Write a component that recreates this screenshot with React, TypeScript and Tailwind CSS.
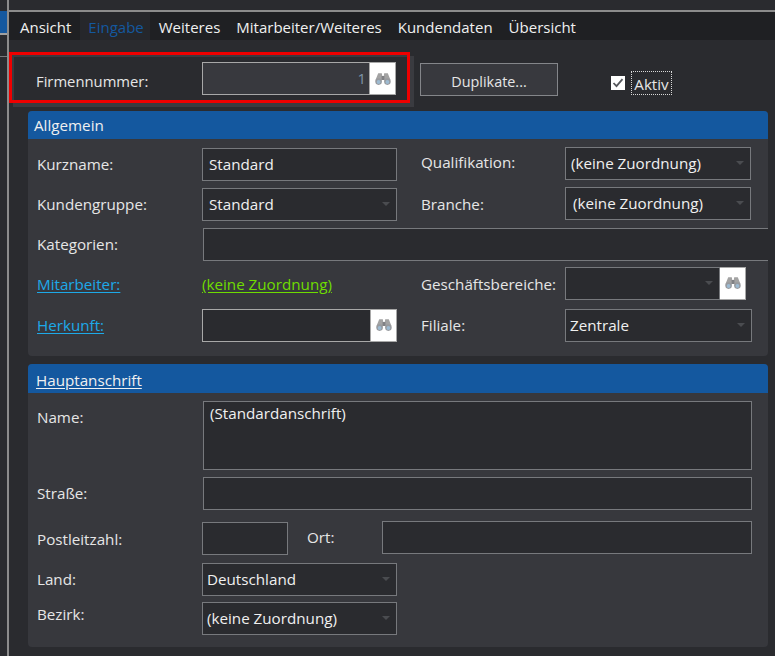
import React from "react";

const Binoculars = () => (
  <svg width="18" height="14" viewBox="0 0 18 14">
    <path d="M4.2 1.2h3.6l.5 2.8h1.4l.5-2.8h3.6l2.6 6.5-2.4 2H11.2L10.4 8H7.6l-.8 1.7H2l-.4-2z" fill="#a3a3a3" />
    <rect x="7.6" y="4" width="2.8" height="4" fill="#808184" />
    <circle cx="4.6" cy="9.6" r="3.3" fill="#989a9e" />
    <circle cx="13.4" cy="9.6" r="3.3" fill="#989a9e" />
    <circle cx="4.6" cy="10" r="1.9" fill="#9dbbd2" />
    <circle cx="13.4" cy="10" r="1.9" fill="#9dbbd2" />
  </svg>
);

const Search = () => (
  <div className="w-[26px] shrink-0 bg-white border border-[#a8a8a8] border-l-0 flex items-center justify-center">
    <Binoculars />
  </div>
);

const Arrow = () => (
  <span className="ml-auto mr-[6px] w-0 h-0 border-x-[4px] border-x-transparent border-t-[4px] border-t-[#4a4c50] shrink-0" />
);

const Select = ({ text, w, pl = "pl-[5px]" }: { text: string; w: string; pl?: string }) => (
  <div className={`${w} h-[33px] shrink-0 bg-[#2a2b2f] border border-[#77797d] flex items-center ${pl} text-[#f0f0f0]`}>
    <span>{text}</span>
    <Arrow />
  </div>
);

const Input = ({ text, w }: { text?: string; w: string }) => (
  <div className={`${w} h-[33px] shrink-0 bg-[#2a2b2f] border border-[#77797d] flex items-center pl-[6px] text-[#f0f0f0]`}>
    {text}
  </div>
);

const Label = ({ children, w = "w-[165px]" }: { children: React.ReactNode; w?: string }) => (
  <div className={`${w} shrink-0 text-[#e6e6e6]`}>{children}</div>
);

const LinkLabel = ({ children }: { children: React.ReactNode }) => (
  <div className="w-[165px] shrink-0 text-[#1da9e8] underline underline-offset-2">{children}</div>
);

const Row = ({ children, h }: { children: React.ReactNode; h: string }) => (
  <div className={`flex items-center ${h}`}>{children}</div>
);

export default function App() {
  return (
    <div
      className="w-[775px] h-[656px] overflow-hidden bg-[#2a2b2f] flex text-[15.2px] leading-[19px]"
      style={{ fontFamily: '"Open Sans", sans-serif' }}
    >
      <div className="w-[9px] shrink-0 flex flex-col bg-[#2a2b2f] border-r-[2px] border-[#8c8c8c]">
        <div className="h-[11px] shrink-0" />
        <div className="h-[22px] shrink-0 bg-[#14589f]" />
        <div className="h-[24px] shrink-0 border-t-[2px] border-b border-t-[#a0a0a0] border-b-[#77797d]" />
      </div>
      <div className="flex-1 min-w-0 flex flex-col">
        <div className="h-[12px] shrink-0 bg-[#2a2b2f] border-b-[2px] border-[#8c8c8c]" />
        <div className="h-[28px] shrink-0 bg-[#1f2023] flex items-center pl-[2px] text-[15px] text-[#f0f0f0]">
          <div className="pl-[9px] pr-[9px] pt-[3px] h-full flex items-center">Ansicht</div>
          <div className="pl-[8px] pr-[6px] pt-[3px] h-full flex items-center text-[#14589f] bg-[#26272b]">Eingabe</div>
          <div className="pl-[9px] pr-[8px] pt-[3px] h-full flex items-center">Weiteres</div>
          <div className="pl-[8px] pr-[8px] pt-[3px] h-full flex items-center">Mitarbeiter/Weiteres</div>
          <div className="pl-[8px] pr-[8px] pt-[3px] h-full flex items-center">Kundendaten</div>
          <div className="pl-[8px] pt-[3px] h-full flex items-center">Übersicht</div>
        </div>
        <div className="flex-1 min-h-0 flex flex-col">
          <div className="h-[52px] mt-[11px] flex items-start shrink-0">
            <div className="w-[401px] h-[51px] mt-[1px] shrink-0 border-[3px] border-[#ee0000] flex items-start pt-[7px] pl-[24px] bg-[#2a2b2f] text-[14.8px] text-[#e6e6e6] shadow-[inset_2px_2px_0_#3a3b40,4px_4px_0_#3a3b40]">
              <div className="w-[166px] shrink-0 pt-[10px]">Firmennummer:</div>
              <div className="flex h-[33px]">
                <div className="w-[168px] bg-[#38393e] border border-[#a8a8a8] flex items-center justify-end pr-[3px] text-[#7f94a8]">1</div>
                <Search />
              </div>
            </div>
            <div className="w-[138px] h-[33px] ml-[10px] mt-[12px] pt-[4px] bg-[#38393e] border border-[#84868a] flex items-center justify-center text-[14.4px] text-[#e6e6e6]">Duplikate...</div>
            <div className="ml-[53px] mt-[20px] flex items-center">
              <div className="w-[14px] h-[14px] bg-white flex items-center justify-center">
                <svg width="12" height="12" viewBox="0 0 12 12"><path d="M1.5 6l3 3.2 6-7" fill="none" stroke="#55575c" strokeWidth="1.8" /></svg>
              </div>
              <div className="ml-[6px] h-[24px] w-[41px] pt-[2px] border border-dotted border-[#d8d8d8] flex items-center justify-center text-[#e6e6e6]">Aktiv</div>
            </div>
          </div>

          <div className="ml-[19px] mt-[8px] w-[740px] h-[245px] shrink-0 rounded-[4px] bg-[#37383d] flex flex-col">
            <div className="h-[28px] shrink-0 rounded-t-[4px] bg-[#14589f] flex items-center pl-[6px] text-[#f0f0f0]">Allgemein</div>
            <div className="pl-[9px] pt-[5px] flex flex-col">
              <Row h="h-[40px]">
                <Label>Kurzname:</Label>
                <Input text="Standard" w="w-[195px]" />
                <div className="w-[144px] ml-[24px] shrink-0 pb-[4px] text-[#e6e6e6]">Qualifikation:</div>
                <div className="-mt-[2px]"><Select text="(keine Zuordnung)" w="w-[186px]" /></div>
              </Row>
              <Row h="h-[40px]">
                <Label>Kundengruppe:</Label>
                <Select text="Standard" w="w-[195px]" pl="pl-[6px]" />
                <Label w="w-[144px] ml-[24px]">Branche:</Label>
                <div className="-mt-[2px]"><Select text="(keine Zuordnung)" w="w-[186px]" pl="pl-[7px]" /></div>
              </Row>
              <Row h="h-[40px]">
                <Label>Kategorien:</Label>
                <div className="ml-[1px] h-[33px] flex-1 bg-[#2a2b2f] border border-r-0 border-[#77797d]" />
              </Row>
              <Row h="h-[40px]">
                <LinkLabel>Mitarbeiter:</LinkLabel>
                <div className="w-[195px] shrink-0 text-[#6fdc00] underline underline-offset-2">(keine Zuordnung)</div>
                <Label w="w-[144px] ml-[24px]">Geschäftsbereiche:</Label>
                <div className="flex h-[33px] -mt-[2px]">
                  <div className="w-[155px] bg-[#2a2b2f] border border-[#77797d] flex items-center"><Arrow /></div>
                  <Search />
                </div>
              </Row>
              <Row h="h-[42px]">
                <LinkLabel>Herkunft:</LinkLabel>
                <div className="flex h-[33px] w-[195px]">
                  <div className="flex-1 bg-[#2a2b2f] border border-[#a8a8a8]" />
                  <Search />
                </div>
                <Label w="w-[144px] ml-[24px]">Filiale:</Label>
                <Select text="Zentrale" w="w-[187px]" pl="pl-[4px]" />
              </Row>
            </div>
          </div>

          <div className="ml-[19px] mt-[8px] w-[740px] h-[283px] shrink-0 rounded-[4px] bg-[#37383d] flex flex-col">
            <div className="h-[29px] shrink-0 rounded-t-[4px] bg-[#14589f] flex items-center pl-[8px] pt-[3px] text-[#f0f0f0] underline underline-offset-2">Hauptanschrift</div>
            <div className="pl-[9px] flex flex-col">
              <div className="flex pt-[8px] h-[76px]">
                <div className="w-[166px] shrink-0 pt-[7px] text-[#e6e6e6]">Name:</div>
                <div className="w-[549px] h-[69px] bg-[#2a2b2f] border border-[#77797d] pl-[6px] pt-[2px] text-[#f0f0f0]">(Standardanschrift)</div>
              </div>
              <Row h="h-[49px]">
                <Label>Straße:</Label>
                <div className="ml-[1px] w-[549px] h-[33px] bg-[#2a2b2f] border border-[#77797d]" />
              </Row>
              <Row h="h-[41px]">
                <div className="w-[165px] shrink-0 pt-[2px] text-[#e6e6e6]">Postleitzahl:</div>
                <Input w="w-[86px]" />
                <div className="w-[94px] shrink-0 pl-[19px] -mt-[2px] text-[#e6e6e6]">Ort:</div>
                <div className="w-[370px] h-[33px] -mt-[2px] bg-[#2a2b2f] border border-[#77797d]" />
              </Row>
              <Row h="h-[40px]">
                <Label>Land:</Label>
                <Select text="Deutschland" w="w-[195px]" pl="pl-[4px]" />
              </Row>
              <Row h="h-[38px]">
                <div className="w-[165px] shrink-0 pb-[8px] text-[#e6e6e6]">Bezirk:</div>
                <Select text="(keine Zuordnung)" w="w-[195px]" pl="pl-[4px]" />
              </Row>
            </div>
          </div>
        </div>
      </div>
    </div>
  );
}
